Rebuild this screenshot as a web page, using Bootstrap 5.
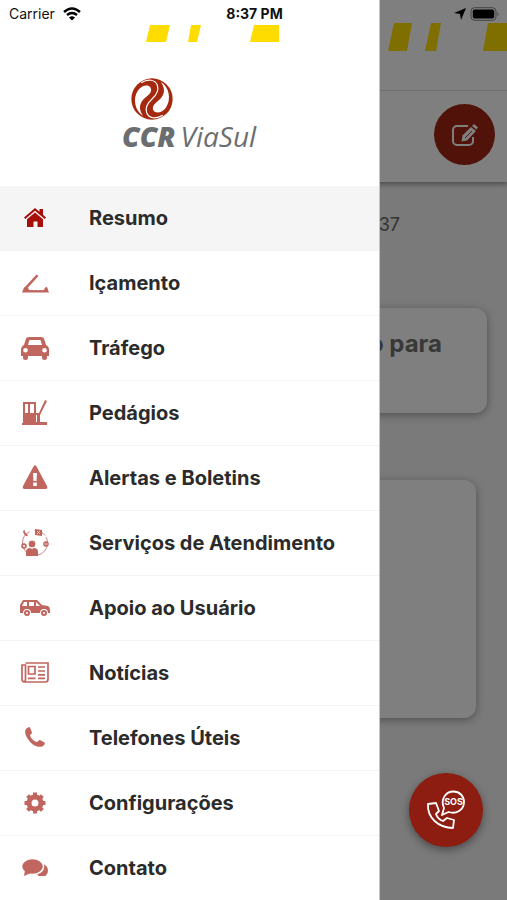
<!DOCTYPE html>
<html lang="pt-BR">
<head>
<meta charset="utf-8">
<meta name="viewport" content="width=device-width, initial-scale=1">
<title>CCR ViaSul</title>
<link rel="stylesheet" href="https://cdn.jsdelivr.net/npm/bootstrap@5.3.0/dist/css/bootstrap.min.css">
<script src="https://cdn.jsdelivr.net/npm/bootstrap@5.3.0/dist/js/bootstrap.bundle.min.js"></script>
<style>
  body { font-family: Inter, "Liberation Sans", sans-serif; color: #2b2b2b; }
  .app { display: grid; grid-template: minmax(0, 1fr) / minmax(0, 1fr); height: 100vh; overflow: hidden; }
  .app > .layer { grid-area: 1 / 1; min-width: 0; }
  .page { background: #f4f4f4; }
  .page-head { background: #fff; box-shadow: 0 2px 5px rgba(0,0,0,.4); }
  .brand-strip { height: 91px; padding-top: 22px; border-bottom: 1px solid #dcdcdc; }
  .brand-strip svg, .drawer-strip svg { display: block; }
  .tools { height: 91px; padding: 0 12px 4px 0; }
  .round-btn { border: 0; border-radius: 50%; padding: 0; display: grid; place-items: center; }
  .edit-btn { width: 61px; height: 61px; background: #a02412; }
  .stamp { font-size: 18px; line-height: 24px; padding: 31px 107px 0 0; color: #666; }
  .panel { background: #fff; border-radius: 12px; box-shadow: 0 2px 8px rgba(0,0,0,.35); }
  .notice { margin: 71px 20px 0; height: 105px; padding: 20px 45px; font-size: 24px; line-height: 32px; font-weight: 700; color: #707070; }
  .summary { margin: 67px 31px 0; height: 238px; }
  .shade { background: rgba(0,0,0,.5); }
  .drawer { width: 75%; background: #fff; padding-bottom: 24px; border-right: 1px solid #c4c4c4; }
  .drawer-strip { padding: 25px 0 0 146px; }
  .brand { height: 144px; flex: none; padding: 36px 0 0 122px; }
  .brand svg { display: block; margin-left: 9px; }
  .brand-name { font-family: "Open Sans", "Noto Sans", sans-serif; font-style: italic; font-size: 28px; line-height: 32px; font-weight: 400; color: #6b6e70; gap: 5px; }
  .brand-name b { font-weight: 800; }
  .menu { min-height: 0; overflow: hidden; }
  .menu a { display: flex; flex-shrink: 0; align-items: center; gap: 38px; height: 65px; padding-left: 19px; border-bottom: 1px solid #f3f3f3; font-size: 20px; line-height: 28px; font-weight: 700; color: #2b2b2b; text-decoration: none; }
  .menu a.active { background: #f5f5f5; }
  .menu svg { width: 32px; height: 32px; color: #c1665f; fill: currentColor; flex: none; }
  .menu .active svg { color: #a80f0a; }
  .status { position: absolute; inset: 0 0 auto; display: grid; grid-template-columns: 1fr auto 1fr; align-items: center; height: 27px; padding: 0 7px 0 9px; font-size: 14px; line-height: 20px; color: #111; }
  .sos-btn { position: absolute; right: 24px; bottom: 53px; width: 74px; height: 74px; background: #8c1d10; box-shadow: 0 3px 8px rgba(0,0,0,.4); }
</style>
</head>
<body>
<div class="app position-relative">
  <main class="layer page">
    <header class="page-head">
      <div class="brand-strip d-flex justify-content-end">
        <svg width="120" height="30" viewBox="0 0 120 30" fill="#ffdc00" aria-hidden="true"><path d="M7 1h18l-5 28H1zM44 1h10l-5 28H38zM101 1h19v28H96z"/></svg>
      </div>
      <div class="tools d-flex align-items-center justify-content-end">
        <button class="round-btn edit-btn" aria-label="Editar">
          <svg width="28" height="26" viewBox="0 0 28 26" fill="none" stroke="#fff" stroke-width="2" aria-hidden="true"><path d="M17 4H6a4 4 0 0 0-4 4v11a4 4 0 0 0 4 4h12a4 4 0 0 0 4-4v-4"/><path d="M23 2l4 3.500-1.500 2-4.500-3.500z" fill="#fff" stroke="none"/><path d="M20 5l5 4-9 9.500-5.500 1 1-6z" fill="#fff" stroke="none"/><path d="M14 16l7-7" stroke="#a02412" stroke-width="1"/></svg>
        </button>
      </div>
    </header>
    <div class="stamp text-end">37</div>
    <section class="panel notice text-end">o para</section>
    <section class="panel summary"></section>
  </main>
  <div class="layer shade"></div>

  <aside class="layer drawer d-flex flex-column">
    <div class="drawer-strip">
      <svg width="134" height="17" viewBox="0 0 134 17" fill="#ffdc00" aria-hidden="true"><path d="M4 0h20l-4 17H0zM45 0h10l-4 17h-9zM108 0h24q1 0 1 1v16h-29z"/></svg>
    </div>
    <div class="brand">
      <svg width="42" height="42" viewBox="0 0 124 124" aria-hidden="true">
        <circle cx="62" cy="62" r="61" fill="#a5290f"/>
        <g id="swirl"><path d="M36 112C12 98 4 62 20 38 30 22 50 18 57 27c6 9 0 19-9 26C32 65 16 84 36 112Z" fill="#fff"/><path d="M30 14C50 2 72 4 78 22c5 16-4 29-16 40" fill="none" stroke="#fff" stroke-width="3.500"/></g>
        <use href="#swirl" transform="rotate(180 62 62)"/>
      </svg>
      <div class="brand-name d-flex"><b>CCR</b><span>ViaSul</span></div>
    </div>
    <nav class="menu d-flex flex-column flex-fill" aria-label="Menu">
      <a href="#" class="active" aria-current="page">
        <svg viewBox="0 0 32 32"><path d="M16 6l4.500 3.800V7H24v5.800l3 2.700-1.300 1.500L16 8.800 6.300 17 5 15.500z"/><path d="M16 10.500l8 6.700V25h-5.500v-5.500h-4V25H8v-7.800z"/></svg>Resumo</a>
      <a href="#"><svg viewBox="0 0 32 32"><path d="M6 20L17.500 7.500 19.500 9 9 20.500l1 2.500h15l1-2.500 2-.5 2 5.500H3l2-5z"/><path d="M11 23l2-1 2 1 2-1 2 1 2-1 2 1" fill="none" stroke="#fff" stroke-width=".8"/></svg>Içamento</a>
      <a href="#"><svg viewBox="0 0 32 32"><path fill-rule="evenodd" d="M10 5h12c2 0 3 1 3.500 3l1.500 5c2 1 3 2.500 3 4.500V24h-2v1.500a2.200 2.200 0 0 1-5 0V24H9v1.500a2.200 2.200 0 0 1-5 0V24H2v-6.500c0-2 1-3.500 3-4.500l1.500-5C7 6 8 5 10 5zm.5 3L9 13h14l-1.500-5zM6.500 16a2.300 2.300 0 1 0 0 4.600 2.300 2.300 0 0 0 0-4.600zm19 0a2.300 2.300 0 1 0 0 4.600 2.300 2.300 0 0 0 0-4.600z"/></svg>Tráfego</a>
      <a href="#"><svg viewBox="0 0 32 32"><path fill-rule="evenodd" d="M4 5h13v11h3L26 3l2 1-7 14v7h7v3H3v-2h1zm2 2v9h3V7zm5 0v9h4V7z"/><path d="M17.500 18v7" stroke="#fff" stroke-width="1"/></svg>Pedágios</a>
      <a href="#"><svg viewBox="0 0 32 32"><path d="M14.500 4.500q1.500-2.500 3 0L28 24q1 3-1.500 3h-21Q3 27 4 24z"/><path fill="#fff" d="M14 11h4l-.5 8h-3zm.2 9.500h3.600V24h-3.600z"/></svg>Alertas e Boletins</a>
      <a href="#"><svg viewBox="0 0 32 32"><circle cx="16" cy="16" r="12.500" fill="none" stroke="currentColor" stroke-width=".8" stroke-dasharray="17 5 12 2"/><circle cx="13" cy="17" r="4" stroke="#fff"/><path d="M7 29v-4q0-4 4-4l2 1 2-1q4 0 4 4v4z"/><path d="M16 2l7 1v6l-7-1z"/><path d="M18 4l3 3m0-3l-3 3" stroke="#fff" stroke-width=".6"/><circle cx="5" cy="19" r="2.800"/><circle cx="27" cy="17" r="2.800"/><path d="M4 18l2 2m0-2l-2 2M25.500 17h3" stroke="#fff" stroke-width=".8"/><path d="M4 4l1.500-1 1 3L9 8l-1 1.500Q4.500 8 4 4z"/></svg>Serviços de Atendimento</a>
      <a href="#"><svg viewBox="0 0 32 32"><path fill-rule="evenodd" d="M4 8h14l5 5 6 1q2 1 2 4v3h-2a4 4 0 0 0-8 0h-9a4 4 0 0 0-8 0H1v-8zm1 2-2 4h5v-4zm5 0v4h5v-4zm7 0v4h4l-4-4z"/><path fill-rule="evenodd" d="M8 18a3 3 0 1 0 0 6 3 3 0 0 0 0-6zm0 2a1 1 0 1 1 0 2 1 1 0 0 1 0-2zm17-2a3 3 0 1 0 0 6 3 3 0 0 0 0-6zm0 2a1 1 0 1 1 0 2 1 1 0 0 1 0-2z"/></svg>Apoio ao Usuário</a>
      <a href="#"><svg viewBox="0 0 32 32"><g fill="none" stroke="currentColor" stroke-width="1.700"><path d="M6.500 6H29v16q0 3-2.500 3h-21Q3 25 3 22V8h3.500v15q-.5 2-2 2"/><path d="M9.500 9.500H16V17H9.500zM19 10h7M19 14h7M19 17.800h7M9 21.300h7.500M19 21.300h7"/></g></svg>Notícias</a>
      <a href="#"><svg viewBox="0 0 32 32"><path d="M7 7c1-1.500 3-2 4-1.500l2 5c0 1.500-2 2-2 3 1 3 3.500 5.500 6.500 6.500 1.500 0 2-2 3.500-2l4.500 2.500c1 1-.5 3.500-2.500 4-5 1.500-10-2-13-6S5 10 7 7z"/></svg>Telefones Úteis</a>
      <a href="#"><svg viewBox="0 0 32 32"><circle cx="16" cy="16" r="6" fill="none" stroke="currentColor" stroke-width="5"/><path fill="none" stroke="currentColor" stroke-width="4" d="M16 5.500V9m0 14v3.500M5.500 16H9m14 0h3.500M8.600 8.600l2.400 2.400m10 10 2.400 2.400M8.600 23.400 11 21m10-10 2.400-2.400"/></svg>Configurações</a>
      <a href="#"><svg viewBox="0 0 32 32"><ellipse cx="23" cy="18.500" rx="6" ry="6.500"/><path d="M24 22l4 5-8-2z"/><ellipse cx="13.500" cy="14.500" rx="11" ry="8" stroke="#fff" stroke-width="1.500"/><path d="M6 18l-1 6 7-3z"/></svg>Contato</a>
    </nav>
  </aside>

  <button class="round-btn sos-btn" aria-label="SOS">
    <svg width="40" height="40" viewBox="0 0 40 40" fill="none" stroke="#fff" stroke-width="1.800" stroke-linejoin="round" aria-hidden="true"><path d="M16 25l2-7C14 9 20 1.500 27.500 1.500c6 0 10.500 4.500 10.500 10.500 0 8-8 12.500-15.500 10z"/><path d="M2 14l8-1 3 8-3 3c1 3 4 6 7 7l4-3 7 2-1 8C13 38 1 28 2 14z"/><text x="27.500" y="15" text-anchor="middle" font-family="Inter, sans-serif" font-size="9" font-weight="700" fill="#fff" stroke="none">SOS</text></svg>
  </button>

  <div class="status">
    <div class="d-flex align-items-center gap-2"><span>Carrier</span>
      <svg width="18" height="14" viewBox="0 0 18 14" fill="none" stroke="#000" stroke-width="2.400" aria-hidden="true"><path d="M1 5Q9-2 17 5M4 8q5-4 10 0"/><path d="M9 13.500 6 10.500q3-2.500 6 0z" fill="#000" stroke="none"/></svg>
    </div>
    <span class="fw-bold">8:37 PM</span>
    <div class="d-flex align-items-center justify-content-end gap-1">
      <svg width="12" height="12" viewBox="0 0 12 12" aria-hidden="true"><path d="M12 0 7 12 6 6 0 5z"/></svg>
      <svg width="30" height="14" viewBox="0 0 30 14" aria-hidden="true"><rect x="1" y=".7" width="25" height="12.600" rx="3.500" fill="none" stroke="#444"/><rect x="2.800" y="2.500" width="21.400" height="9" rx="1.800"/><path d="M27.500 5q2 2 0 4z" fill="#444"/></svg>
    </div>
  </div>
</div>
</body>
</html>
